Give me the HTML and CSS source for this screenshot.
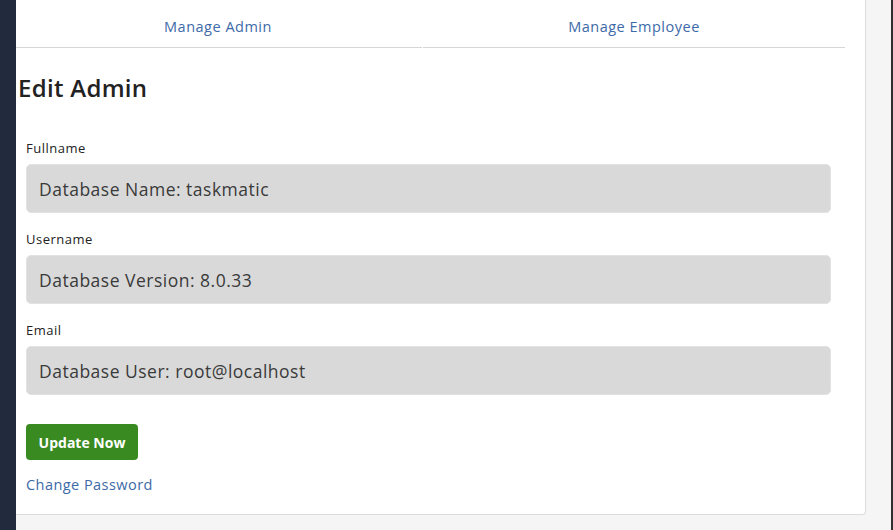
FILE: index.html
```html
<!DOCTYPE html>
<html>
<head>
<meta charset="utf-8">
<link rel="stylesheet" href="styles.css">
</head>
<body>
<div class="sidebar"></div>
<main class="main">
  <section class="card">
    <nav class="tabs">
      <a class="tab tab-first" href="#">Manage Admin</a>
      <a class="tab" href="#">Manage Employee</a>
    </nav>
    <h2 class="title">Edit Admin</h2>
    <form class="form">
      <div class="field">
        <label class="label">Fullname</label>
        <div class="input">Database Name: taskmatic</div>
      </div>
      <div class="field">
        <label class="label">Username</label>
        <div class="input">Database Version: 8.0.33</div>
      </div>
      <div class="field">
        <label class="label">Email</label>
        <div class="input">Database User: root@localhost</div>
      </div>
      <button class="btn" type="button">Update Now</button>
      <a class="link" href="#">Change Password</a>
    </form>
  </section>
</main>
<div class="edge"></div>
</body>
</html>
```
FILE: styles.css
```css
* { box-sizing: border-box; }
html, body { margin: 0; height: 100%; }
body {
  display: flex;
  background: #f5f5f5;
  font-family: "Open Sans", sans-serif;
  overflow: hidden;
}
.sidebar { width: 16px; flex: none; background: #222a3e; }
.edge { width: 2px; flex: none; background: #2f2f2f; }
.main { flex: 1; }
.card {
  width: 850px;
  height: 515px;
  background: #fff;
  border: 1px solid #dcdcdc;
  border-top: none;
  border-left: none;
  border-radius: 0 0 4px 0;
  padding-right: 20px;
}
.tabs { display: flex; gap: 1px; }
.tab {
  flex: 1;
  height: 48px;
  display: flex;
  align-items: center;
  justify-content: center;
  padding-top: 5px;
  color: #3d6aa8;
  text-decoration: none;
  font-size: 14.5px;
  letter-spacing: 0.5px;
  border-bottom: 1px solid #d6d6d6;
}
.tab-first { flex: none; width: 406px; padding-right: 2px; }
.title {
  margin: 24px 0 0 2px;
  font-size: 24px;
  font-weight: 600;
  color: #222;
  line-height: 32px;
  letter-spacing: 0.3px;
}
.form {
  padding: 34px 0 0 10px;
  display: flex;
  flex-direction: column;
  align-items: flex-start;
}
.field { width: 805px; margin-bottom: 16px; }
.label {
  display: block;
  font-size: 13px;
  letter-spacing: 0.5px;
  color: #222;
  line-height: 20px;
  margin-bottom: 6px;
}
.input {
  height: 49px;
  background: #d9d9d9;
  border: 1px solid #e2e2e2;
  border-radius: 5px;
  padding: 0 12px;
  display: flex;
  align-items: center;
  font-size: 17.5px;
  letter-spacing: 0.5px;
  color: #3a3a3a;
}
.btn {
  margin-top: 13px;
  width: 112px;
  height: 36px;
  border: none;
  border-radius: 4px;
  background: #3a8a22;
  color: #fff;
  font-family: inherit;
  font-weight: 700;
  font-size: 14px;
  padding: 0;
}
.link {
  margin-top: 15px;
  color: #3d6aa8;
  text-decoration: none;
  font-size: 14.5px;
  letter-spacing: 0.45px;
}
```
